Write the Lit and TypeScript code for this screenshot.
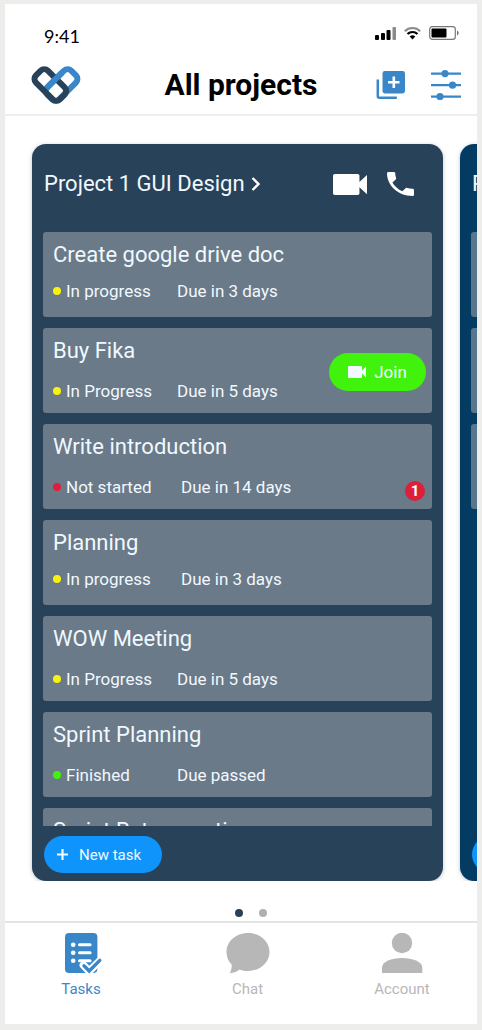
import { LitElement, html, css, svg, nothing } from "lit";
import { customElement, property } from "lit/decorators.js";
import { classMap } from "lit/directives/class-map.js";

interface Task {
  title?: string;
  status?: string;
  due?: string;
  tone?: "idle" | "busy" | "done";
  snug?: boolean;
  wide?: boolean;
  join?: boolean;
  alerts?: number;
}

const TASKS: Task[] = [
  { title: "Create google drive doc", status: "In progress", due: "Due in 3 days", tone: "busy", snug: true },
  { title: "Buy Fika", status: "In Progress", due: "Due in 5 days", tone: "busy", join: true },
  { title: "Write introduction", status: "Not started", due: "Due in 14 days", tone: "idle", wide: true, alerts: 1 },
  { title: "Planning", status: "In progress", due: "Due in 3 days", tone: "busy", snug: true, wide: true },
  { title: "WOW Meeting", status: "In Progress", due: "Due in 5 days", tone: "busy" },
  { title: "Sprint Planning", status: "Finished", due: "Due passed", tone: "done" },
  { title: "Sprint Retrospective" },
];

const NEXT_TASKS: Task[] = [{}, {}, {}];

const camera = svg`<path fill="currentColor" d="M17 10.5V7c0-.55-.45-1-1-1H4c-.55 0-1 .45-1 1v10c0 .55.45 1 1 1h12c.55 0 1-.45 1-1v-3.5l4 4v-11l-4 4z"/>`;

const reset = css`
  * { box-sizing: border-box; }
  h1, h2, h3, p, ul { margin: 0; padding: 0; font-weight: 400; }
  ul { list-style: none; }
  button { border: 0; padding: 0; margin: 0; background: none; color: inherit; font: inherit; cursor: pointer; }
  svg { display: block; }
`;

@customElement("project-card")
class ProjectCard extends LitElement {
  @property() name = "";
  @property({ attribute: false }) tasks: Task[] = [];

  static styles = [
    reset,
    css`
      :host {
        box-sizing: border-box;
        display: flex;
        flex-direction: column;
        min-height: 0;
        padding: 0 11px;
        border-radius: 14px;
        background: var(--card, #284359);
        color: #f1f8ff;
        box-shadow: 0 1px 4px rgba(40, 67, 89, 0.3);
      }
      .head {
        display: flex;
        align-items: center;
        height: 80px;
        flex: none;
        padding: 0 18px 0 1px;
      }
      .name {
        display: flex;
        align-items: center;
        gap: 6px;
        font-size: 22px;
        line-height: 26px;
        white-space: nowrap;
      }
      .calls {
        display: flex;
        align-items: center;
        gap: 20px;
        margin-left: auto;
        color: #fff;
      }
      .list {
        flex: 1;
        min-height: 0;
        margin-top: 8px;
        overflow-y: auto;
        scrollbar-width: none;
        display: flex;
        flex-direction: column;
        gap: 11px;
      }
      .task {
        flex: none;
        display: flex;
        height: 85px;
        padding: 10px 6px 8px 10px;
        border-radius: 3px;
        background: rgba(171, 178, 184, 0.5);
      }
      .body { flex: 1; min-width: 0; white-space: nowrap; }
      .title { font-size: 22px; line-height: 26px; }
      .meta {
        display: flex;
        margin-top: 17px;
        font-size: 17px;
        line-height: 20px;
      }
      .snug .meta { margin-top: 13px; }
      .status {
        display: flex;
        align-items: center;
        gap: 5px;
        width: 124px;
      }
      .wide .status { width: 128px; }
      .status::before {
        content: "";
        width: 8px;
        height: 8px;
        border-radius: 50%;
        background: #f7f210;
      }
      .idle .status::before { background: #dc1f3a; }
      .done .status::before { background: #41f20c; }
      .join {
        align-self: center;
        display: flex;
        align-items: center;
        justify-content: center;
        gap: 8px;
        width: 97px;
        height: 38px;
        border-radius: 19px;
        background: #41f20c;
        font-size: 17px;
      }
      .alerts {
        align-self: flex-end;
        width: 20px;
        margin-right: 1px;
        border-radius: 10px;
        background: #dc1f3a;
        color: #fff;
        font-size: 15px;
        font-weight: 700;
        line-height: 20px;
        text-align: center;
      }
      .foot { flex: none; padding: 10px 1px 8px; }
      .new {
        display: flex;
        align-items: center;
        gap: 10px;
        width: 118px;
        height: 37px;
        padding-left: 12px;
        border-radius: 19px;
        background: #0f94fb;
        font-size: 15px;
        white-space: nowrap;
      }
    `,
  ];

  private renderTask(t: Task) {
    const classes = {
      task: true,
      snug: !!t.snug,
      wide: !!t.wide,
      idle: t.tone === "idle",
      done: t.tone === "done",
    };
    return html`
      <li class=${classMap(classes)}>
        <div class="body">
          ${t.title ? html`<h3 class="title">${t.title}</h3>` : nothing}
          ${t.status
            ? html`<div class="meta"><span class="status">${t.status}</span><span>${t.due}</span></div>`
            : nothing}
        </div>
        ${t.join
          ? html`<button class="join">
              <svg width="18" height="12" viewBox="3 6 18 12">${camera}</svg>Join
            </button>`
          : nothing}
        ${t.alerts ? html`<span class="alerts">${t.alerts}</span>` : nothing}
      </li>
    `;
  }

  render() {
    return html`
      <header class="head">
        <h2>
          <button class="name">
            ${this.name}
            <svg width="10" height="16" viewBox="0 0 10 16">
              <path d="M1.5 2l6 6-6 6" fill="none" stroke="#fff" stroke-width="2.4" />
            </svg>
          </button>
        </h2>
        <div class="calls">
          <button aria-label="Video call">
            <svg width="34" height="21" viewBox="3 6 18 12" preserveAspectRatio="none">${camera}</svg>
          </button>
          <button aria-label="Voice call">
            <svg width="27" height="24" viewBox="3 3 18 18" preserveAspectRatio="none">
              <path fill="currentColor" d="M6.62 10.79c1.44 2.83 3.76 5.14 6.59 6.59l2.2-2.2c.27-.27.67-.36 1.02-.24 1.12.37 2.33.57 3.57.57.55 0 1 .45 1 1V20c0 .55-.45 1-1 1-9.39 0-17-7.61-17-17 0-.55.45-1 1-1h3.5c.55 0 1 .45 1 1 0 1.25.2 2.45.57 3.57.11.35.03.74-.25 1.02l-2.2 2.2z" />
            </svg>
          </button>
        </div>
      </header>
      <ul class="list">${this.tasks.map((t) => this.renderTask(t))}</ul>
      <footer class="foot">
        <button class="new">
          <svg width="13" height="13" viewBox="0 0 13 13">
            <path d="M6.5 1v11M1 6.5h11" stroke="currentColor" stroke-width="2.2" />
          </svg>
          New task
        </button>
      </footer>
    `;
  }
}

@customElement("app-root")
class AppRoot extends LitElement {
  static styles = [
    reset,
    css`
      :host {
        box-sizing: border-box;
        display: block;
        height: 100vh;
        padding: 4px 5px 6px;
        background: #ededec;
        font-family: Roboto, sans-serif;
      }
      .screen {
        display: flex;
        flex-direction: column;
        height: 100%;
        overflow: hidden;
        background: #fff;
      }
      .system {
        display: flex;
        align-items: center;
        justify-content: space-between;
        padding: 20px 18px 8px 39px;
        font: 18px/24px Lato, sans-serif;
        color: #000;
      }
      .radio { display: flex; align-items: center; gap: 8px; padding-bottom: 6px; }
      .bar {
        display: grid;
        grid-template-columns: 1fr auto 1fr;
        align-items: center;
        height: 60px;
        padding: 0 16px;
        border-bottom: 2px solid #eeeeee;
      }
      .logo { margin-left: 10px; }
      .heading { font-size: 30px; line-height: 36px; font-weight: 700; color: #000; }
      .tools { display: flex; gap: 25px; justify-content: flex-end; color: #3987c9; }
      .board {
        flex: 1;
        min-height: 0;
        display: flex;
        gap: 17px;
        padding: 28px 0 0 27px;
        overflow: hidden;
      }
      .card { flex: none; width: calc(100% - 34px); }
      .next { --card: #043b62; }
      .pager {
        display: flex;
        justify-content: center;
        gap: 16px;
        padding: 28px 0 4px 19px;
      }
      .dot { width: 8px; height: 8px; border-radius: 50%; background: #b0b0b0; }
      .dot.on { background: #284359; }
      .tabs {
        display: grid;
        grid-template-columns: 152fr 181fr 128fr;
        height: 103px;
        padding: 10px 11px 0 0;
        border-top: 2px solid #e3e4e6;
      }
      .tab {
        display: flex;
        flex-direction: column;
        align-items: center;
        gap: 5px;
        font-size: 15px;
        line-height: 18px;
        color: #b7b7b7;
        text-decoration: none;
      }
      .tab.on { color: #3987c9; }
    `,
  ];

  render() {
    return html`
      <main class="screen">
        <div class="system">
          <span>9:41</span>
          <div class="radio">
            <svg width="21" height="14" viewBox="0 0 21 14">
              <rect y="9" width="4" height="5" rx="1" />
              <rect x="6" y="7" width="4" height="7" rx="1" />
              <rect x="11.5" y="4" width="4" height="10" rx="1" />
              <rect x="17.5" y="1" width="3.5" height="13" rx="1" fill="#8a8a8a" />
            </svg>
            <svg width="17" height="14" viewBox="0 0 17 14" fill="none" stroke-width="2">
              <path d="M.8 5.2a11 11 0 0 1 15.4 0" stroke="#8a8a8a" />
              <path d="M3.5 8a7.2 7.2 0 0 1 10 0" stroke="#000" stroke-width="2.2" />
              <path d="M8.5 13.4L5.7 10.6a4 4 0 0 1 5.6 0z" fill="#000" />
            </svg>
            <svg width="30" height="14" viewBox="0 0 30 14">
              <rect x=".7" y=".7" width="25.6" height="12.6" rx="2.6" fill="none" stroke="#777" stroke-width="1.2" />
              <rect x="2.5" y="2.5" width="15" height="9" rx="1" />
              <path d="M28 4.6c2.2 1 2.2 3.8 0 4.8z" fill="#777" />
            </svg>
          </div>
        </div>
        <header class="bar">
          <svg class="logo" width="50" height="38" viewBox="0 0 50 38" fill="none" stroke-width="6">
            <rect x="-16.9" y="-8.4" width="33.8" height="16.8" rx="5" stroke="#3987c9" transform="translate(30.6 19) rotate(-45)" />
            <rect x="-16.9" y="-8.4" width="33.8" height="16.8" rx="5" stroke="#284359" transform="translate(19.3 19) rotate(45)" />
            <path d="M31 6.7L15.8 21.9" stroke="#3987c9" />
          </svg>
          <h1 class="heading">All projects</h1>
          <div class="tools">
            <button aria-label="Add project">
              <svg width="30" height="30" viewBox="0 0 30 30">
                <rect x="6.5" y="1" width="22.5" height="22.5" rx="2.4" fill="currentColor" />
                <path d="M1.8 9.5v16.7a1.5 1.5 0 0 0 1.5 1.5h17.5" fill="none" stroke="currentColor" stroke-width="2.5" />
                <path d="M17.8 6.5v11.4M12.1 12.2h11.4" stroke="#fff" stroke-width="2.6" />
              </svg>
            </button>
            <button aria-label="Filters">
              <svg width="30" height="30" viewBox="0 0 30 30" fill="currentColor">
                <path d="M0 3.6h30M0 15.2h30M0 26.6h30" stroke="currentColor" stroke-width="2.2" />
                <circle cx="14" cy="3.6" r="3.6" />
                <circle cx="21.5" cy="15.2" r="3.6" />
                <circle cx="9" cy="26.6" r="3.6" />
              </svg>
            </button>
          </div>
        </header>
        <section class="board">
          <project-card class="card" name="Project 1 GUI Design" .tasks=${TASKS}></project-card>
          <project-card class="card next" name="Project 2" .tasks=${NEXT_TASKS}></project-card>
        </section>
        <div class="pager">
          <button class="dot on" aria-label="First project"></button>
          <button class="dot" aria-label="Second project"></button>
        </div>
        <nav class="tabs">
          <a class="tab on" href="#tasks">
            <svg width="44" height="42" viewBox="0 0 44 42">
              <rect x="6" y="0" width="32.4" height="40" rx="4" fill="currentColor" />
              <g fill="#fff">
                <circle cx="14.2" cy="11.8" r="2.3" />
                <circle cx="14.2" cy="19.8" r="2.3" />
                <circle cx="14.2" cy="27.8" r="2.3" />
              </g>
              <path d="M20.5 11.8h10.6M20.5 19.8h10.6M20.5 27.8h10.6" stroke="#fff" stroke-width="3" stroke-linecap="round" />
              <path d="M24.4 32.2l5.8 6 11.2-11" fill="none" stroke="#fff" stroke-width="7.6" stroke-linecap="round" />
              <path d="M25 32.8l5.2 5.2 10.6-10.6" fill="none" stroke="currentColor" stroke-width="3.4" stroke-linecap="round" />
            </svg>
            Tasks
          </a>
          <a class="tab" href="#chat">
            <svg width="44" height="42" viewBox="0 0 44 42" fill="currentColor">
              <path d="M22 0c11.9 0 21.5 8.4 21.5 18.9S33.9 37.9 22 37.9c-3 0-5.900-.5-8.400-1.500C11.600 38.300 8 40 3.600 40c1.600-2.200 2.400-5.600 2-8.500C2.400 28.200.5 23.800.5 18.900.5 8.400 10.100 0 22 0z" />
            </svg>
            Chat
          </a>
          <a class="tab" href="#account">
            <svg width="44" height="42" viewBox="0 0 44 42" fill="currentColor">
              <circle cx="22" cy="10" r="10.2" />
              <path d="M2 40v-5.500C2 28.800 11.500 25 22 25s20.300 3.800 20.300 9.500V40z" />
            </svg>
            Account
          </a>
        </nav>
      </main>
    `;
  }
}
